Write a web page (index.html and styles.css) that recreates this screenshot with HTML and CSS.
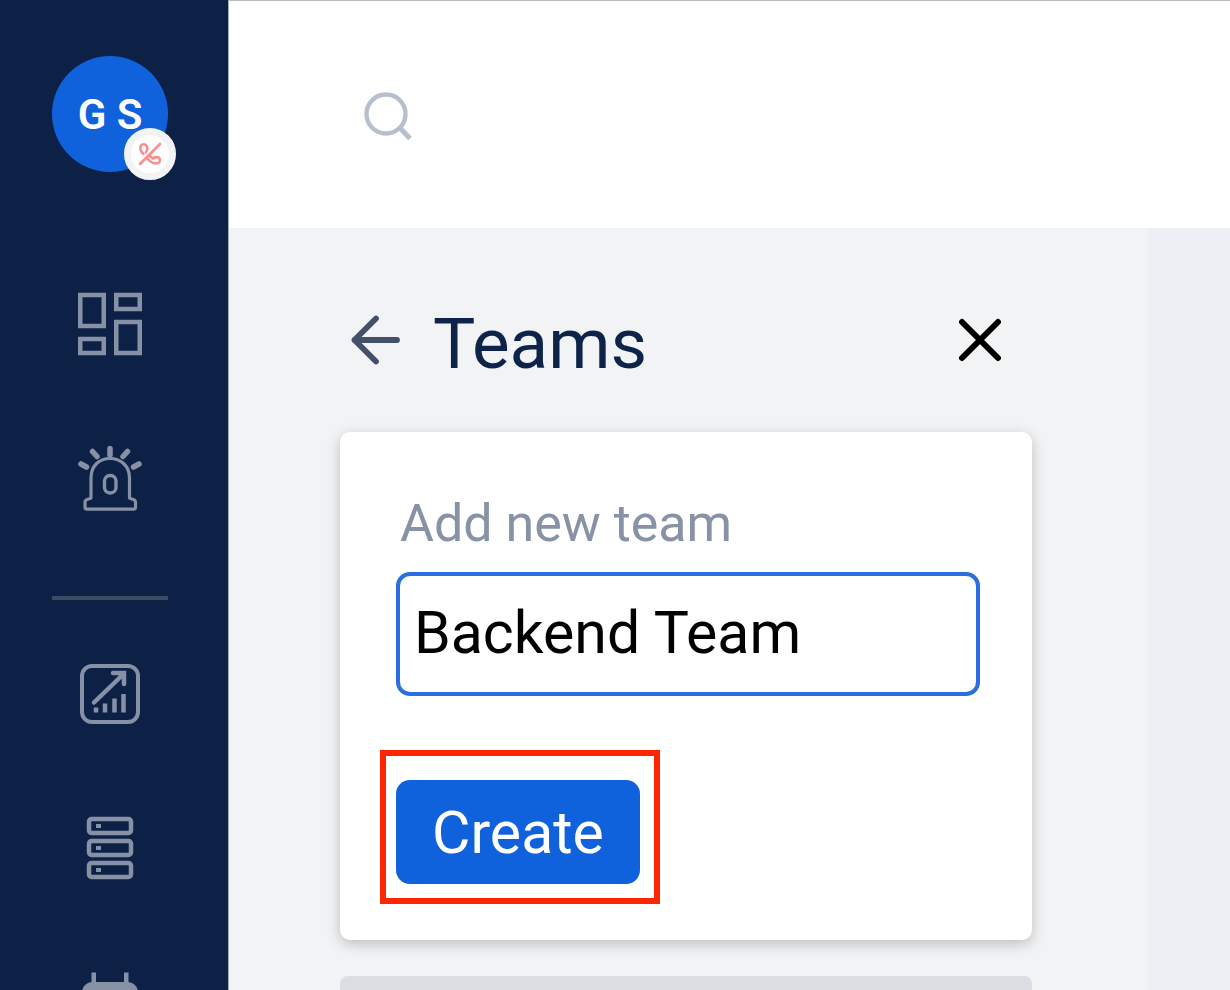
FILE: index.html
```html
<!DOCTYPE html>
<html lang="en">
<head>
<meta charset="utf-8">
<meta name="viewport" content="width=device-width, initial-scale=1">
<title>Teams</title>
<link rel="stylesheet" href="styles.css">
</head>
<body>
<div class="app">
  <nav class="sidebar" aria-label="Main">
    <button class="avatar" type="button" aria-label="Account, not on call">
      <span class="avatar-initials">G S</span>
      <span class="avatar-badge">
        <svg width="24" height="24" viewBox="0 0 24 24" fill="none" stroke="#fa8f90" stroke-width="2.6" stroke-linecap="round" stroke-linejoin="round">
          <path d="M5.500 12C2.500 9.500 1.500 5.500 3 3.500C4.500 1.500 8 2 9 4.500C9.800 6.500 9 8.500 8 10.500"/>
          <path d="M10 17C13 20.500 17 22 20 21C22.500 20 22.500 16.500 20.500 15.500C18.500 14.500 16.500 15.500 14.500 16.500L11.500 13.500"/>
          <path d="M2 22L22 2"/>
        </svg>
      </span>
    </button>
    <div class="nav-group">
      <a class="nav-link" href="#dashboard" aria-label="Dashboard">
        <svg width="64" height="64" viewBox="0 0 64 64" fill="none" stroke="#8791a6" stroke-width="4.500">
          <rect x="2.250" y="3" width="23.500" height="31"/>
          <rect x="38.250" y="3" width="23.500" height="14"/>
          <rect x="2.250" y="47" width="23.500" height="14"/>
          <rect x="38.250" y="30" width="23.500" height="31"/>
        </svg>
      </a>
      <a class="nav-link" href="#incidents" aria-label="Incidents">
        <svg width="64" height="66" viewBox="0 0 64 66" fill="none" stroke="#8791a6" stroke-width="3.200" stroke-linejoin="round">
          <path d="M13 52V32C13 20 21 12.500 32 12.500S51.500 20 51.500 32V52C51.500 53 57.500 52.500 57.500 56V61C57.500 62.500 57 63.200 55.500 63.200H9C7.500 63.200 7 62.500 7 61V56C7 52.500 13 53 13 52Z"/>
          <rect x="26.500" y="29.500" width="11.500" height="17.500" rx="5.500" stroke-width="3.400"/>
          <g stroke-width="5.500" stroke-linecap="round"><path d="M32 2.500V9"/><path d="M14.500 5.500L19 10.500M49.500 5.500L45 10.500"/><path d="M3 18L8.500 21M61 18L55.500 21"/></g>
        </svg>
      </a>
    </div>
    <hr class="nav-divider">
    <div class="nav-group">
      <a class="nav-link" href="#analytics" aria-label="Analytics">
        <svg width="64" height="64" viewBox="0 0 64 64" fill="none" stroke="#8791a6" stroke-width="4">
          <rect x="4" y="4" width="56" height="56" rx="10"/>
          <path d="M16 40.500L45 12.500M35 11H46V22" stroke-width="4.500" stroke-linecap="round"/>
          <path d="M18 45.500V50.500M27 41.500V50.500M36.500 36.500V50.500M45.500 32V50.500" stroke-width="4.500"/>
        </svg>
      </a>
      <a class="nav-link" href="#services" aria-label="Services">
        <svg width="64" height="64" viewBox="0 0 64 64" fill="none" stroke="#8791a6" stroke-width="4.500">
          <rect x="11" y="3" width="42" height="14" rx="2.500"/>
          <rect x="11" y="25" width="42" height="14" rx="2.500"/>
          <rect x="11" y="47" width="42" height="14" rx="2.500"/>
          <path d="M18 10h5M18 32h5M18 54h5" stroke-width="4"/>
        </svg>
      </a>
      <a class="nav-link" href="#schedules" aria-label="Schedules">
        <svg width="64" height="64" viewBox="0 0 64 64" fill="#8791a6">
          <path d="M14 12H50Q59 13 60 22V54Q60 62 51 62H13Q4 62 4 54V22Q5 13 14 12Z"/>
          <path d="M13.500 2.500h4.500v12h-4.500zM46 2.500h4.500v12h-4.500z"/>
        </svg>
      </a>
    </div>
  </nav>
  <div class="page">
    <header class="topbar">
      <button class="icon-button" type="button" aria-label="Search">
        <svg width="50" height="50" viewBox="0 0 50 50" fill="none" stroke="#b6bfce" stroke-width="4.400">
          <circle cx="23" cy="23" r="19.500"/><path d="M37 37L47 47.500" stroke-width="5"/>
        </svg>
      </button>
    </header>
    <div class="content">
      <main class="panel">
        <div class="panel-header">
          <button class="icon-button" type="button" aria-label="Back">
            <svg width="50" height="50" viewBox="0 0 50 50" fill="none" stroke="#42506a" stroke-width="5.800" stroke-linecap="round" stroke-linejoin="round">
              <path d="M46 25H3.500M25 3.500L3.500 25L25 46.500"/>
            </svg>
          </button>
          <h1 class="panel-title">Teams</h1>
          <button class="icon-button close" type="button" aria-label="Close">
            <svg width="44" height="44" viewBox="0 0 44 44" fill="none" stroke="#000" stroke-width="6" stroke-linecap="round">
              <path d="M4 4L40 40M40 4L4 40"/>
            </svg>
          </button>
        </div>
        <form class="card">
          <label class="field-label" for="team-name">Add new team</label>
          <input class="field-input" id="team-name" type="text" value="Backend Team">
          <div class="highlight">
            <button class="create-button" type="button">Create</button>
          </div>
        </form>
        <div class="next-card"></div>
      </main>
      <aside class="gutter"></aside>
    </div>
  </div>
</div>
</body>
</html>
```
FILE: styles.css
```css
* {
  box-sizing: border-box;
}

body {
  margin: 0;
  font-family: Roboto, "Liberation Sans", sans-serif;
}

button {
  padding: 0;
  border: 0;
  background: none;
  font: inherit;
  cursor: pointer;
}

svg {
  display: block;
}

.app {
  display: flex;
  height: 100vh;
  overflow: hidden;
}

.sidebar {
  display: flex;
  flex: none;
  flex-direction: column;
  align-items: center;
  width: 229px;
  padding: 56px 8px 0 0;
  overflow: hidden;
  border-right: 1px solid #a3abbc;
  background: #0d2146;
}

.avatar {
  position: relative;
  flex: none;
  width: 116px;
  height: 116px;
  margin-bottom: 120px;
  border-radius: 50%;
  background: #1062dc;
  color: #fff;
  font-size: 42px;
  font-weight: 600;
}

.avatar-badge {
  position: absolute;
  right: -8px;
  bottom: -8px;
  display: grid;
  place-items: center;
  width: 52px;
  height: 52px;
  border: 7px solid #f2f3f5;
  border-radius: 50%;
  background: #fff;
}

.nav-group {
  display: flex;
  flex: none;
  flex-direction: column;
  gap: 90px;
}

.nav-link {
  width: 64px;
  height: 64px;
}

.nav-divider {
  flex: none;
  width: 116px;
  height: 4px;
  margin: 86px 0 62px;
  border: 0;
  background: #3d4a64;
}

.page {
  display: flex;
  flex: 1;
  flex-direction: column;
  min-width: 0;
}

.topbar {
  display: flex;
  flex: none;
  align-items: center;
  height: 228px;
  padding: 2px 0 0 134px;
  border-top: 1px solid #bcbcbe;
  background: #fff;
}

.content {
  display: flex;
  flex: 1;
  min-height: 0;
}

.panel {
  display: flex;
  flex: 1;
  flex-direction: column;
  min-width: 0;
  padding: 72px 116px 0 111px;
  background: #f2f3f5;
}

.gutter {
  flex: none;
  width: 82px;
  background: #edf0f5;
}

.panel-header {
  display: flex;
  align-items: center;
  height: 80px;
  margin-bottom: 52px;
  padding: 0 30px 0 11px;
}

.panel-title {
  margin: 0 0 0 32px;
  padding-top: 8px;
  color: #0d2349;
  font-size: 71px;
  font-weight: 400;
  line-height: 80px;
}

.close {
  margin-left: auto;
}

.card {
  display: flex;
  flex: none;
  flex-direction: column;
  align-items: flex-start;
  padding: 60px 52px 36px 56px;
  border-radius: 10px;
  background: #fff;
  box-shadow: 0 4px 14px rgba(0, 0, 0, 0.22);
}

.field-label {
  margin: 0 0 16px 4px;
  color: #8892a7;
  font-size: 52px;
  line-height: 64px;
}

.field-input {
  width: 100%;
  height: 124px;
  padding: 0 14px 4px;
  border: 4px solid #2a6fe0;
  border-radius: 14px;
  outline: none;
  background: #fff;
  color: #000;
  font: 400 59px Roboto, "Liberation Sans", sans-serif;
}

.highlight {
  margin: 54px 0 0 -16px;
  padding: 24px 14px 14px 10px;
  border: 6px solid #fe2600;
}

.create-button {
  display: block;
  height: 104px;
  padding: 0 36px;
  border-radius: 14px;
  background: #1062dc;
  color: #fff;
  font-size: 59px;
}

.next-card {
  flex: 1;
  margin-top: 36px;
  border-radius: 8px 8px 0 0;
  background: #dadde2;
}
```
